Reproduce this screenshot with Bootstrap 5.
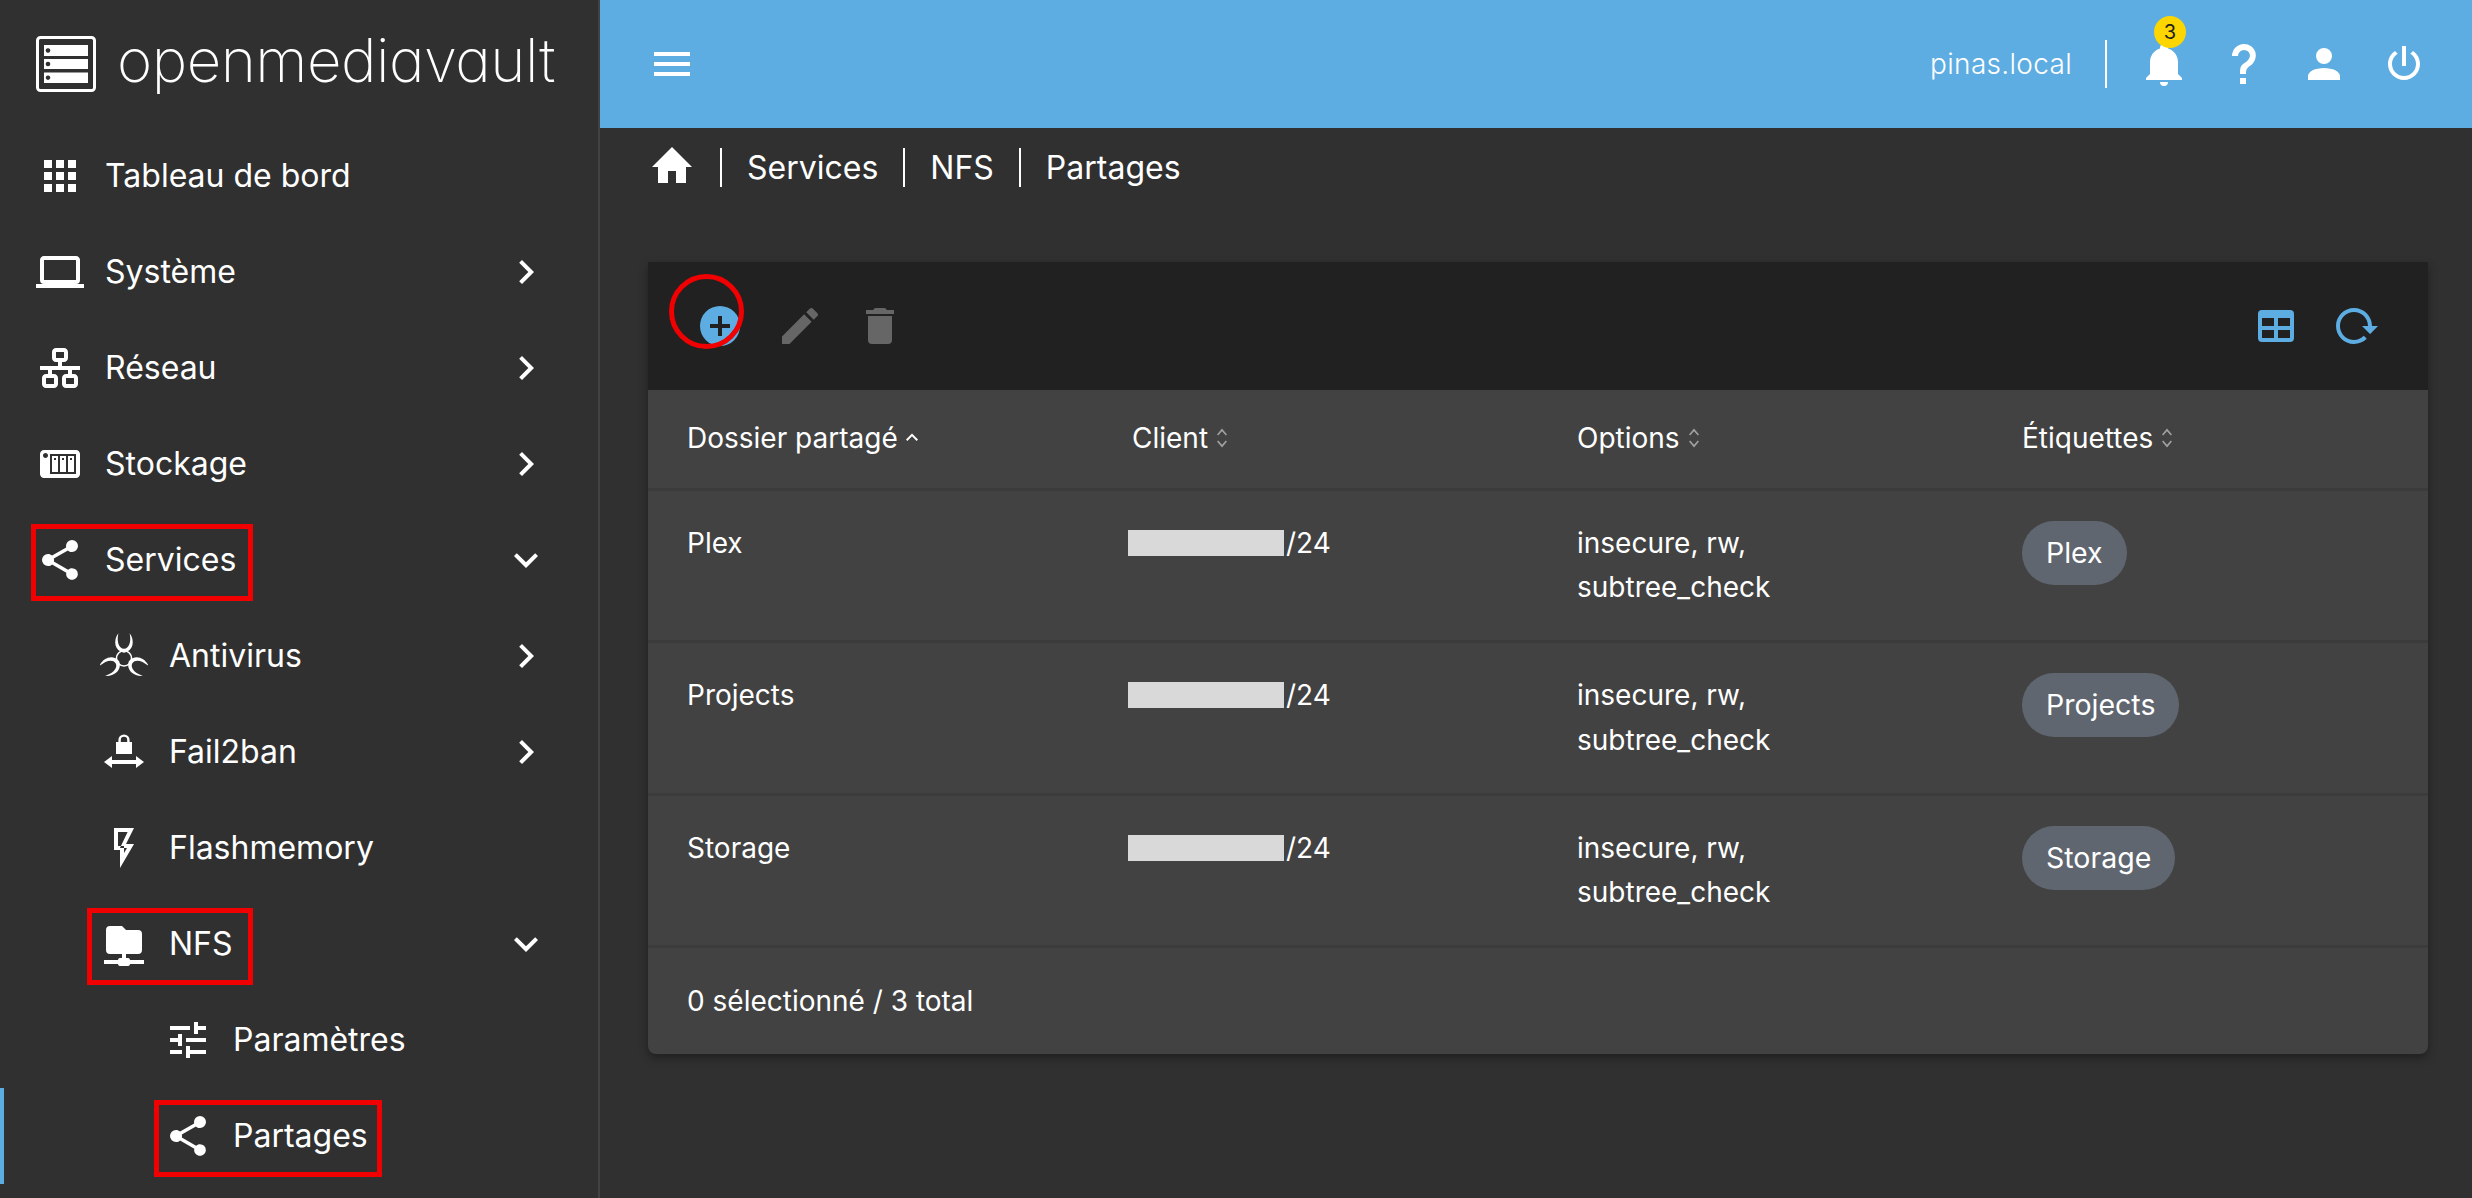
<!DOCTYPE html>
<html lang="fr">
<head>
<meta charset="utf-8">
<title>openmediavault</title>
<link href="https://cdn.jsdelivr.net/npm/bootstrap@5.3.0/dist/css/bootstrap.min.css" rel="stylesheet">
<style>
:root { --om-blue:#5dade2; --om-bg:#303030; --om-panel:#424242; --om-bar:#212121; --om-red:#f00000; }
html, body { height:100%; }
body { background:var(--om-bg); color:#fff; font-family:Inter,"Noto Sans",sans-serif; font-size:28px; line-height:1.6; }
svg { fill:currentColor; display:block; flex-shrink:0; }
.om-i { width:48px; height:48px; }
.om-side { width:600px; background:var(--om-bg); border-right:2px solid var(--om-panel); position:relative; }
.om-logo { height:128px; padding-left:36px; gap:21px; }
.om-logo svg { width:60px; height:56px; }
.om-word { font-size:60px; font-weight:200; line-height:1; font-feature-settings:"cv11" 1; letter-spacing:-.5px; margin-top:-8px; }
.om-item { height:96px; padding:0 48px 0 36px; color:#fff; font-size:32px; position:relative; text-decoration:none; }
.om-item:hover { color:#fff; }
.om-item > svg:first-child { margin-right:21px; }
.om-l2 { padding-left:100px; }
.om-l3 { padding-left:164px; }
.om-label { flex-grow:1; white-space:nowrap; }
.om-active::before { content:""; position:absolute; left:0; top:0; bottom:0; width:4px; background:var(--om-blue); }
.om-mark { position:absolute; border:5px solid var(--om-red); top:12px; height:77px; pointer-events:none; }
.om-mark-services { left:31px; width:222px; }
.om-mark-nfs { left:87px; width:166px; }
.om-mark-shares { left:154px; width:228px; }
.om-head { height:128px; background:var(--om-blue); padding:0 28px 0 48px; }
.om-host { font-size:28px; color:#fff; font-weight:300; letter-spacing:.3px; }
.om-vr { width:2px; height:48px; background:#fff; margin:0 17px 0 33px; }
.om-btn { width:80px; height:80px; padding:0; border:0; background:transparent; color:#fff; position:relative; }
.om-bell { margin-left:0; }
.om-count { position:absolute; left:30px; top:-8px; width:32px; height:32px; border-radius:50%; background:#fdd600; color:#212121; font-size:20px; line-height:32px; text-align:center; }
.om-crumbs { height:78px; padding-left:48px; font-size:32px; margin-bottom:56px; }
.om-crumbs > span { padding:0 25px; border-left:2px solid #fff; line-height:39px; white-space:nowrap; }
.om-crumbs > svg { margin-right:24px; }
.om-card { margin:0 44px 0 48px; background:var(--om-panel); border:0; border-radius:0 0 8px 8px; color:#fff; box-shadow:0 4px 8px rgba(0,0,0,.35); overflow:hidden; }
.om-tools { height:128px; background:var(--om-bar); padding:0 32px; border-radius:0; }
.om-add { color:var(--om-blue); }
.om-ring { position:absolute; left:-11px; top:-12px; width:75px; height:75px; border:5px solid var(--om-red); border-radius:50%; pointer-events:none; }
.om-off { color:#666; }
.om-tool-blue { color:var(--om-blue); }
.om-table { table-layout:fixed; margin:0; --bs-table-bg:transparent; --bs-table-color:#fff; --bs-table-border-color:#3b3b3b; color:#fff; font-size:28px; }
.om-table > * > tr > * { padding:0 39px; border-bottom:3px solid #3b3b3b; color:#fff; box-shadow:none; }
.om-table th { height:99px; font-weight:400; vertical-align:middle; line-height:1.6; }
.om-table td { height:150.5px; padding-top:30px; padding-bottom:30px; vertical-align:top; line-height:44.8px; }
.om-sort { display:inline-block; width:16px; height:28px; margin-left:6px; vertical-align:-4px; }
.om-sort-dim { color:#a0a0a0; }
.om-hide { display:inline-block; width:156px; height:26px; background:#d9d9d9; margin-left:-4px; margin-right:2px; vertical-align:-3px; }
.om-tag { display:inline-block; height:64px; line-height:64px; padding:0 24px; border-radius:32px; background:#5f6670; color:#fff; margin-top:0; font-size:28.5px; }
.om-foot { height:106px; padding:0 39px; }
</style>
</head>
<body class="d-flex overflow-hidden">
<aside class="om-side flex-shrink-0">
  <div class="om-logo d-flex align-items-center">
    <svg viewBox="0 0 60 56"><rect x="1.5" y="1.5" width="57" height="53" rx="3" fill="none" stroke="currentColor" stroke-width="3"/><path fill-rule="evenodd" d="M8 9H52V20H8ZM12 12.2a2.3 2.3 0 1 0 .01 0ZM8 23H52V33H8ZM12 25.7a2.3 2.3 0 1 0 .01 0ZM8 36.500H52V47H8ZM12 39.400a2.3 2.3 0 1 0 .01 0Z"/></svg>
    <span class="om-word">openmediavault</span>
  </div>
  <nav class="nav flex-column flex-nowrap">
    <a class="om-item d-flex align-items-center" href="#"><svg class="om-i" viewBox="0 0 24 24"><path d="M16,20H20V16H16M16,14H20V10H16M10,8H14V4H10M16,8H20V4H16M10,14H14V10H10M4,14H8V10H4M4,20H8V16H4M10,20H14V16H10M4,8H8V4H4V8Z"/></svg><span class="om-label">Tableau de bord</span></a>
    <a class="om-item d-flex align-items-center" href="#"><svg class="om-i" viewBox="0 0 24 24"><path d="M4,6H20V16H4M20,18A2,2 0 0,0 22,16V6C22,4.89 21.1,4 20,4H4C2.89,4 2,4.89 2,6V16A2,2 0 0,0 4,18H0V20H24V18H20Z"/></svg><span class="om-label">Système</span><svg class="om-i" viewBox="0 0 24 24"><path d="M8.59,16.58L13.17,12L8.59,7.41L10,6L16,12L10,18L8.59,16.58Z"/></svg></a>
    <a class="om-item d-flex align-items-center" href="#"><svg class="om-i" viewBox="0 0 24 24"><path d="M10,2C8.89,2 8,2.89 8,4V7C8,8.11 8.89,9 10,9H11V11H2V13H6V15H5C3.89,15 3,15.89 3,17V20C3,21.11 3.89,22 5,22H9C10.11,22 11,21.11 11,20V17C11,15.89 10.11,15 9,15H8V13H16V15H15C13.89,15 13,15.89 13,17V20C13,21.11 13.89,22 15,22H19C20.11,22 21,21.11 21,20V17C21,15.89 20.11,15 19,15H18V13H22V11H13V9H14C15.11,9 16,8.11 16,7V4C16,2.89 15.11,2 14,2H10M10,4H14V7H10V4M5,17H9V20H5V17M15,17H19V20H15V17Z"/></svg><span class="om-label">Réseau</span><svg class="om-i" viewBox="0 0 24 24"><path d="M8.59,16.58L13.17,12L8.59,7.41L10,6L16,12L10,18L8.59,16.58Z"/></svg></a>
    <a class="om-item d-flex align-items-center" href="#"><svg class="om-i" viewBox="0 0 24 24"><path fill-rule="evenodd" d="M4 5C2.89 5 2 5.89 2 7V17C2 18.11 2.9 19 4 19H20C21.11 19 22 18.11 22 17V7C22 5.89 21.11 5 20 5H4M4.750 6.500C5.440 6.500 6 7.060 6 7.750C6 8.440 5.440 9 4.750 9C4.060 9 3.500 8.440 3.500 7.750C3.500 7.060 4.060 6.500 4.750 6.500M7 7H20V17H7V7M8 8V16H11V8H8M12 8V16H15V8H12M16 8V16H19V8H16M9 9H10V10H9V9M13 9H14V10H13V9M17 9H18V10H17V9Z"/></svg><span class="om-label">Stockage</span><svg class="om-i" viewBox="0 0 24 24"><path d="M8.59,16.58L13.17,12L8.59,7.41L10,6L16,12L10,18L8.59,16.58Z"/></svg></a>
    <a class="om-item d-flex align-items-center" href="#"><svg class="om-i" viewBox="0 0 24 24"><path d="M18,16.08C17.24,16.08 16.56,16.38 16.04,16.85L8.91,12.7C8.96,12.47 9,12.24 9,12C9,11.76 8.96,11.53 8.91,11.3L15.96,7.19C16.5,7.69 17.21,8 18,8A3,3 0 0,0 21,5A3,3 0 0,0 18,2A3,3 0 0,0 15,5C15,5.24 15.04,5.47 15.09,5.7L8.04,9.81C7.5,9.31 6.79,9 6,9A3,3 0 0,0 3,12A3,3 0 0,0 6,15C6.79,15 7.5,14.69 8.04,14.19L15.16,18.34C15.11,18.55 15.08,18.77 15.08,19C15.08,20.61 16.39,21.91 18,21.91C19.61,21.91 20.92,20.61 20.92,19A2.92,2.92 0 0,0 18,16.08Z"/></svg><span class="om-label">Services</span><svg class="om-i" viewBox="0 0 24 24"><path d="M7.41,8.58L12,13.17L16.59,8.58L18,10L12,16L6,10L7.41,8.58Z"/></svg><span class="om-mark om-mark-services"></span></a>
    <a class="om-item om-l2 d-flex align-items-center" href="#"><svg class="om-i" viewBox="0 0 24 24"><g id="om-hazard"><path id="om-cres" d="M9.200 .6C6.400 4.200 7.300 9.600 12 10.400C16.700 9.600 17.600 4.200 14.800 .6C15.700 4.500 14.800 8.200 12 8.400C9.200 8.200 8.300 4.500 9.200 .6Z"/><use href="#om-cres" transform="rotate(120 12 13.200)"/><use href="#om-cres" transform="rotate(240 12 13.200)"/><circle cx="12" cy="13.200" r="3.800" fill="none" stroke="currentColor" stroke-width=".8"/></g></svg><span class="om-label">Antivirus</span><svg class="om-i" viewBox="0 0 24 24"><path d="M8.59,16.58L13.17,12L8.59,7.41L10,6L16,12L10,18L8.59,16.58Z"/></svg></a>
    <a class="om-item om-l2 d-flex align-items-center" href="#"><svg class="om-i" viewBox="0 0 24 24"><path d="M8 7H9.200V6A2.800 2.800 0 0 1 14.800 6V7H16V13H8ZM10.400 7H13.600V6A1.600 1.600 0 0 0 10.400 6ZM2 17L6 14V16H18V14L22 17L18 20V18H6V20Z" fill-rule="evenodd"/></svg><span class="om-label">Fail2ban</span><svg class="om-i" viewBox="0 0 24 24"><path d="M8.59,16.58L13.17,12L8.59,7.41L10,6L16,12L10,18L8.59,16.58Z"/></svg></a>
    <a class="om-item om-l2 d-flex align-items-center" href="#"><svg class="om-i" viewBox="0 0 24 24"><path fill-rule="evenodd" d="M7,2V13H10V22L17,10H13L17,2H7ZM9,4H13.800L10,12H13.500L12,14.500V11H9V4Z"/></svg><span class="om-label">Flashmemory</span></a>
    <a class="om-item om-l2 d-flex align-items-center" href="#"><svg class="om-i" viewBox="0 0 24 24"><path d="M3,15V5A2,2 0 0,1 5,3H11L13,5H19A2,2 0 0,1 21,7V15A2,2 0 0,1 19,17H13V19H14A1,1 0 0,1 15,20H22V22H15A1,1 0 0,1 14,23H10A1,1 0 0,1 9,22H2V20H9A1,1 0 0,1 10,19H11V17H5A2,2 0 0,1 3,15Z"/></svg><span class="om-label">NFS</span><svg class="om-i" viewBox="0 0 24 24"><path d="M7.41,8.58L12,13.17L16.59,8.58L18,10L12,16L6,10L7.41,8.58Z"/></svg><span class="om-mark om-mark-nfs"></span></a>
    <a class="om-item om-l3 d-flex align-items-center" href="#"><svg class="om-i" viewBox="0 0 24 24"><path d="M3,17V19H9V17H3M3,5V7H13V5H3M13,21V19H21V17H13V15H11V21H13M7,9V11H3V13H7V15H9V9H7M21,13V11H11V13H21M15,9H17V7H21V5H17V3H15V9Z"/></svg><span class="om-label">Paramètres</span></a>
    <a class="om-item om-l3 om-active d-flex align-items-center" href="#"><svg class="om-i" viewBox="0 0 24 24"><path d="M18,16.08C17.24,16.08 16.56,16.38 16.04,16.85L8.91,12.7C8.96,12.47 9,12.24 9,12C9,11.76 8.96,11.53 8.91,11.3L15.96,7.19C16.5,7.69 17.21,8 18,8A3,3 0 0,0 21,5A3,3 0 0,0 18,2A3,3 0 0,0 15,5C15,5.24 15.04,5.47 15.09,5.7L8.04,9.81C7.5,9.31 6.79,9 6,9A3,3 0 0,0 3,12A3,3 0 0,0 6,15C6.79,15 7.5,14.69 8.04,14.19L15.16,18.34C15.11,18.55 15.08,18.77 15.08,19C15.08,20.61 16.39,21.91 18,21.91C19.61,21.91 20.92,20.61 20.92,19A2.92,2.92 0 0,0 18,16.08Z"/></svg><span class="om-label">Partages</span><span class="om-mark om-mark-shares"></span></a>
  </nav>
</aside>
<main class="flex-grow-1 d-flex flex-column">
  <header class="om-head d-flex align-items-center flex-shrink-0">
    <svg class="om-i" viewBox="0 0 24 24"><path d="M3,6H21V8H3V6M3,11H21V13H3V11M3,16H21V18H3V16Z"/></svg>
    <div class="ms-auto d-flex align-items-center">
      <span class="om-host">pinas.local</span>
      <span class="om-vr"></span>
      <button class="om-btn d-flex align-items-center justify-content-center" type="button"><svg class="om-i" viewBox="0 0 24 24"><path d="M21,19V20H3V19L5,17V11C5,7.9 7.03,5.17 10,4.29C10,4.19 10,4.1 10,4A2,2 0 0,1 12,2A2,2 0 0,1 14,4C14,4.1 14,4.19 14,4.29C16.97,5.17 19,7.9 19,11V17L21,19M14,21A2,2 0 0,1 12,23A2,2 0 0,1 10,21"/></svg><span class="om-count">3</span></button>
      <button class="om-btn d-flex align-items-center justify-content-center" type="button"><svg class="om-i" viewBox="0 0 24 24"><path d="M10,19H13V22H10V19M12,2C17.35,2.22 19.68,7.62 16.5,11.67C15.67,12.67 14.33,13.33 13.67,14.17C13,15 13,16 13,17H10C10,15.33 10,13.92 10.67,12.92C11.33,11.92 12.67,11.33 13.5,10.67C15.92,8.43 15.32,5.26 12,5A3,3 0 0,0 9,8H6A6,6 0 0,1 12,2Z"/></svg></button>
      <button class="om-btn d-flex align-items-center justify-content-center" type="button"><svg class="om-i" viewBox="0 0 24 24"><path d="M12,4A4,4 0 0,1 16,8A4,4 0 0,1 12,12A4,4 0 0,1 8,8A4,4 0 0,1 12,4M12,14C16.42,14 20,15.79 20,18V20H4V18C4,15.79 7.58,14 12,14Z"/></svg></button>
      <button class="om-btn d-flex align-items-center justify-content-center" type="button"><svg class="om-i" viewBox="0 0 24 24"><path d="M16.56,5.44L15.11,6.89C16.84,7.94 18,9.83 18,12A6,6 0 0,1 12,18A6,6 0 0,1 6,12C6,9.83 7.16,7.94 8.88,6.88L7.44,5.44C5.36,6.88 4,9.28 4,12A8,8 0 0,0 12,20A8,8 0 0,0 20,12C20,9.28 18.64,6.88 16.56,5.44M13,3H11V13H13"/></svg></button>
    </div>
  </header>
  <div class="om-crumbs d-flex align-items-center flex-shrink-0">
    <svg class="om-i" viewBox="0 0 24 24"><path d="M10,20V14H14V20H19V12H22L12,2L2,12H5V20H10Z"/></svg>
    <span>Services</span><span>NFS</span><span>Partages</span>
  </div>
  <section class="card om-card">
    <div class="om-tools d-flex align-items-center">
      <button class="om-btn om-add d-flex align-items-center justify-content-center" type="button"><svg class="om-i" viewBox="0 0 24 24"><path d="M17,13H13V17H11V13H7V11H11V7H13V11H17M12,2A10,10 0 0,0 2,12A10,10 0 0,0 12,22A10,10 0 0,0 22,12A10,10 0 0,0 12,2Z" fill-rule="evenodd"/></svg><span class="om-ring"></span></button>
      <button class="om-btn om-off d-flex align-items-center justify-content-center" type="button"><svg class="om-i" viewBox="0 0 24 24"><path d="M20.71,7.04C21.1,6.65 21.1,6 20.71,5.63L18.37,3.29C18,2.9 17.35,2.9 16.96,3.29L15.12,5.12L18.87,8.87M3,17.25V21H6.75L17.81,9.93L14.06,6.18L3,17.25Z"/></svg></button>
      <button class="om-btn om-off d-flex align-items-center justify-content-center" type="button"><svg class="om-i" viewBox="0 0 24 24"><path d="M19,4H15.5L14.5,3H9.5L8.5,4H5V6H19M6,19A2,2 0 0,0 8,21H16A2,2 0 0,0 18,19V7H6V19Z"/></svg></button>
      <button class="om-btn om-tool-blue ms-auto d-flex align-items-center justify-content-center" type="button"><svg class="om-i" viewBox="0 0 24 24"><path d="M5,4H19A2,2 0 0,1 21,6V18A2,2 0 0,1 19,20H5A2,2 0 0,1 3,18V6A2,2 0 0,1 5,4M5,8V12H11V8H5M13,8V12H19V8H13M5,14V18H11V14H5M13,14V18H19V14H13Z"/></svg></button>
      <button class="om-btn om-tool-blue d-flex align-items-center justify-content-center" type="button"><svg class="om-i" viewBox="0 0 24 24"><path d="M2 12C2 16.97 6.03 21 11 21C13.39 21 15.68 20.06 17.4 18.4L15.9 16.9C14.63 18.25 12.86 19 11 19C4.76 19 1.64 11.46 6.05 7.05C10.46 2.64 18 5.77 18 12H15L19 16H19.1L23 12H20C20 7.03 15.97 3 11 3C6.03 3 2 7.03 2 12Z"/></svg></button>
    </div>
    <table class="table om-table">
      <thead>
        <tr>
          <th>Dossier partagé<svg class="om-sort" viewBox="0 0 16 28"><path d="M2 15.500L8 9.500L14 15.500L12.600 16.900L8 12.300L3.400 16.900Z"/></svg></th>
          <th>Client<svg class="om-sort om-sort-dim" viewBox="0 0 16 28"><path d="M3 10.500L8 4.500L13 10.500L11.800 11.600L8 7.200L4.200 11.600ZM3 17.500L8 23.500L13 17.500L11.800 16.400L8 20.800L4.200 16.400Z"/></svg></th>
          <th>Options<svg class="om-sort om-sort-dim" viewBox="0 0 16 28"><path d="M3 10.500L8 4.500L13 10.500L11.800 11.600L8 7.200L4.200 11.600ZM3 17.500L8 23.500L13 17.500L11.800 16.400L8 20.800L4.200 16.400Z"/></svg></th>
          <th>Étiquettes<svg class="om-sort om-sort-dim" viewBox="0 0 16 28"><path d="M3 10.500L8 4.500L13 10.500L11.800 11.600L8 7.200L4.200 11.600ZM3 17.500L8 23.500L13 17.500L11.800 16.400L8 20.800L4.200 16.400Z"/></svg></th>
        </tr>
      </thead>
      <tbody>
        <tr><td>Plex</td><td><span class="om-hide"></span>/24</td><td>insecure, rw,<br>subtree_check</td><td><span class="om-tag">Plex</span></td></tr>
        <tr><td>Projects</td><td><span class="om-hide"></span>/24</td><td>insecure, rw,<br>subtree_check</td><td><span class="om-tag">Projects</span></td></tr>
        <tr><td>Storage</td><td><span class="om-hide"></span>/24</td><td>insecure, rw,<br>subtree_check</td><td><span class="om-tag">Storage</span></td></tr>
      </tbody>
    </table>
    <div class="om-foot d-flex align-items-center">0 sélectionné / 3 total</div>
  </section>
</main>
</body>
</html>
